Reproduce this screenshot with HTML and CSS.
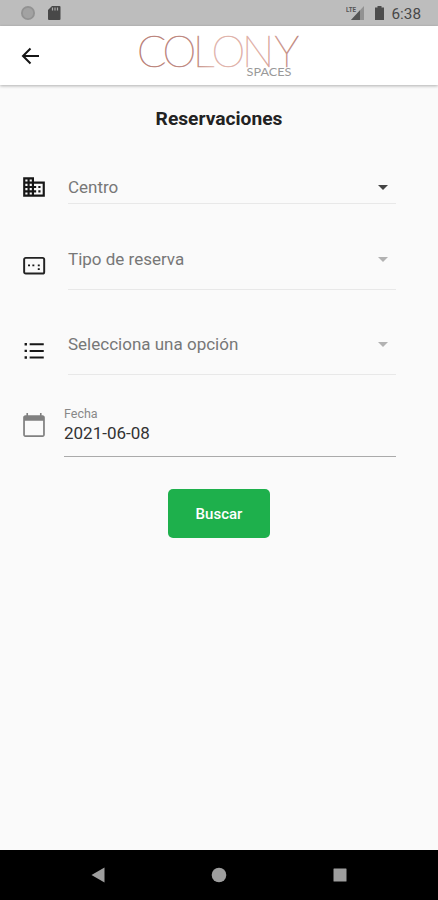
FILE: index.html
```html
<!DOCTYPE html>
<html lang="es">
<head>
<meta charset="utf-8">
<title>Reservaciones</title>
<link rel="stylesheet" href="styles.css">
</head>
<body>
<header class="status">
  <svg class="status-left" width="44" height="16" viewBox="0 0 44 16">
    <circle cx="8" cy="8" r="7" fill="#929292"/><circle cx="8" cy="8" r="5.2" fill="#a2a2a2"/>
    <path d="M32 1h7.500q1 0 1 1v12q0 1-1 1h-10.500q-1 0-1-1V5z" fill="#484848"/>
    <path d="M32.500 2.500v3M35 2.500v3M37.500 2.500v3" stroke="#aaa" stroke-width="1.200"/>
  </svg>
  <div class="status-right">
    <svg width="40" height="16" viewBox="0 0 40 16">
      <path d="M18 1v14H5z" fill="#929292"/><path d="M14 5.300V15H5z" fill="#555"/>
      <text class="lte" x="0" y="6.500" textLength="10" lengthAdjust="spacingAndGlyphs">LTE</text>
      <path d="M31.500 1h4v1.500h2.500V15h-9V2.500h2.500z" fill="#4d4d4d"/>
    </svg>
    <span class="clock">6:38</span>
  </div>
</header>
<div class="appbar">
  <svg class="back" width="24" height="24" viewBox="0 0 24 24"><path d="M21 12H5M12.500 4.500L5 12l7.500 7.500" fill="none" stroke="#161616" stroke-width="2"/></svg>
  <svg class="logo" width="170" height="56" viewBox="0 0 170 56">
    <defs>
      <linearGradient id="rose" gradientUnits="userSpaceOnUse" x1="0" y1="0" x2="170" y2="0">
        <stop offset="0" stop-color="#b98179"/><stop offset=".36" stop-color="#c18c84"/><stop offset=".46" stop-color="#e0b5ad"/><stop offset=".72" stop-color="#e0b0a6"/><stop offset="1" stop-color="#b98177"/>
      </linearGradient>
    </defs>
    <text class="brand" fill="url(#rose)" stroke="url(#rose)" x="1 26.500 57 75.500 106 138.500" y="38">COLONY</text>
    <text class="brand-sub" x="110.500" y="47" textLength="45" lengthAdjust="spacingAndGlyphs">SPACES</text>
  </svg>
</div>
<main class="content">
  <h1>Reservaciones</h1>
  <div class="row centro">
    <svg class="icon" viewBox="0 0 24 24"><path d="M12 7V3H2v18h20V7H12zM6 19H4v-2h2v2zm0-4H4v-2h2v2zm0-4H4V9h2v2zm0-4H4V5h2v2zm4 12H8v-2h2v2zm0-4H8v-2h2v2zm0-4H8V9h2v2zm0-4H8V5h2v2zm10 12h-8v-2h2v-2h-2v-2h2v-2h-2V9h8v10zm-2-8h-2v2h2v-2zm0 4h-2v2h2v-2z"/></svg>
    <div class="select"><span>Centro</span><i class="caret dark"></i></div>
  </div>
  <div class="row tall tipo">
    <svg class="icon" viewBox="0 0 24 24"><rect x="2.900" y="4.500" width="18.500" height="14.500" rx="1.500" fill="none" stroke="#222" stroke-width="1.800"/><path d="M6.500 10.500h1.800v1.800H6.500zM10.500 10.500h1.800v1.800h-1.800zM15.500 10.500h1.800v1.800h-1.800zM15.500 14h1.800v1.800h-1.800z"/></svg>
    <div class="select"><span>Tipo de reserva</span><i class="caret"></i></div>
  </div>
  <div class="row tall opcion">
    <svg class="icon" viewBox="0 0 24 24"><path d="M3.300 4.700h2.200v2.200H3.300zM3.300 10.800h2.200V13H3.300zM3.300 16.900h2.200v2.200H3.300zM8 4.900h13v1.900H8zM8 11h13v1.900H8zM8 17.100h13V19H8z"/></svg>
    <div class="select"><span>Selecciona una opción</span><i class="caret"></i></div>
  </div>
  <div class="row fecha">
    <svg class="icon grey" viewBox="0 0 24 24"><path d="M20 3h-1V1h-1.500v2h-11V1H5v2H4c-1.100 0-2 .900-2 2v16c0 1.100.900 2 2 2h16c1.100 0 2-.900 2-2V5c0-1.100-.900-2-2-2zm.4 18.400H3.600V8h16.800v13.400z"/></svg>
    <div class="date"><label>Fecha</label><span>2021-06-08</span></div>
  </div>
  <button class="search">Buscar</button>
</main>
<nav class="navbar">
  <svg width="16" height="16" viewBox="0 0 16 16"><path d="M14.500.500v15L1.500 8z"/></svg>
  <svg width="16" height="16" viewBox="0 0 16 16"><circle cx="8" cy="8" r="7.300"/></svg>
  <svg width="16" height="16" viewBox="0 0 16 16"><rect x="1.500" y="1.500" width="13" height="13" rx=".5"/></svg>
</nav>
</body>
</html>
```
FILE: styles.css
```css
* { box-sizing: border-box; }
body {
  margin: 0;
  width: 438px;
  height: 900px;
  display: flex;
  flex-direction: column;
  overflow: hidden;
  background: #fafafa;
  font-family: Roboto, "Liberation Sans", sans-serif;
}
.status {
  height: 26px;
  flex: none;
  display: flex;
  justify-content: space-between;
  align-items: center;
  padding: 0 17px 0 20px;
  background: #bdbdbd;
}
.status-right { display: flex; align-items: center; gap: 6px; }
.lte { font: 700 7px Roboto, sans-serif; fill: #555; }
.clock { font-size: 15.3px; line-height: 26px; color: #484848; font-weight: 400; padding-top: 2px; }
.appbar {
  height: 59px;
  flex: none;
  display: flex;
  align-items: flex-start;
  background: #fff;
  box-shadow: 0 1px 3px rgba(0, 0, 0, .3);
}
.back { margin: 18px 0 0 18px; }
.logo { margin: 3px 0 0 94px; overflow: visible; }
.brand { font: 100 43px Lato, sans-serif; stroke-width: .7px; }
.brand-sub { font: 400 10.5px Lato, sans-serif; fill: #999; }
.content {
  flex: 1;
  display: flex;
  flex-direction: column;
  padding: 0 42px 0 21px;
}
h1 {
  margin: 23px 0 0 21px;
  font-size: 19.2px;
  line-height: 22px;
  font-weight: 700;
  text-align: center;
  color: #222;
}
.row { display: flex; }
.icon { width: 26px; height: 26px; flex: none; fill: #161616; }
.icon.grey { fill: #808080; }
.select {
  flex: 1;
  margin-left: 21px;
  display: flex;
  justify-content: space-between;
  align-items: flex-start;
  padding-right: 8px;
  border-bottom: 1px solid #e8e8e8;
  font-size: 17px;
  line-height: 22px;
  color: #777;
}
.caret {
  margin-top: 9px;
  border: 5px solid transparent;
  border-top-color: #b2b2b2;
  border-bottom: 0;
}
.caret.dark { border-top-color: #444; }
.centro { margin-top: 46px; height: 28px; }
.centro .icon { margin-top: -2px; }
.tipo { margin-top: 44px; }
.opcion { margin-top: 43px; }
.tall { height: 42px; }
.tall .icon { margin-top: 5px; }
.fecha { margin-top: 31px; height: 51px; }
.fecha .icon { margin-top: 6px; }
.date {
  flex: 1;
  margin-left: 17px;
  display: flex;
  flex-direction: column;
  border-bottom: 1px solid #aaa;
}
.date label { font-size: 12.5px; line-height: 15px; color: #888; }
.date span { font-size: 17px; line-height: 22px; margin-top: 1px; color: #333; }
.search {
  width: 102px;
  height: 49px;
  margin: 32px 0 0 147px;
  padding: 0;
  border: 0;
  border-radius: 5px;
  background: #1eb04c;
  color: #fff;
  font: 500 15px Roboto, sans-serif;
}
.navbar {
  height: 50px;
  flex: none;
  display: flex;
  justify-content: space-between;
  align-items: center;
  padding: 0 90px;
  background: #000;
  fill: #9e9e9e;
}
```
